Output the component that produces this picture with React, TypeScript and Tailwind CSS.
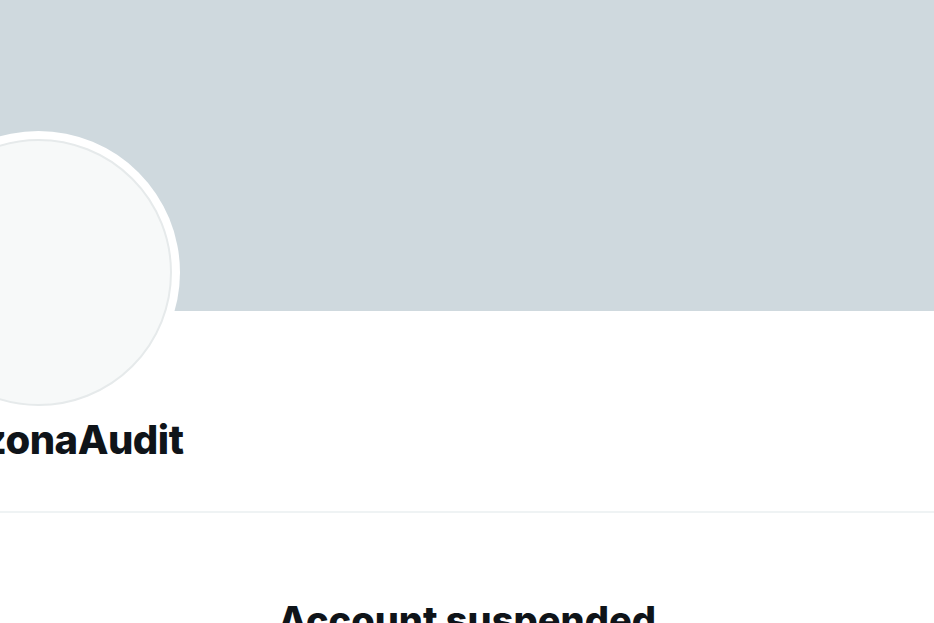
import React from "react";

export default function App() {
  return (
    <div
      className="relative w-[934px] h-[623px] overflow-hidden bg-white text-[#0f1419]"
      style={{ fontFamily: "Inter, 'Noto Sans', sans-serif" }}
    >
      <div className="h-[311px] bg-[#cfd9de]" />
      <div className="absolute left-[-103px] top-[131px] w-[283px] h-[283px] rounded-full bg-white flex items-center justify-center">
        <div className="w-[267px] h-[267px] rounded-full bg-[#f7f9f9] border-2 border-[#e6eaeb]" />
      </div>
      <div className="h-[105px]" />
      <div className="ml-[-74px] text-[40px] leading-[48px] font-extrabold tracking-[-0.5px] whitespace-nowrap">
        ArizonaAudit
      </div>
      <div className="h-[47px]" />
      <div className="h-[2px] bg-[#eff3f4]" />
      <div className="pt-[84px] text-center text-[38px] leading-[46px] font-extrabold">
        Account suspended
      </div>
    </div>
  );
}
